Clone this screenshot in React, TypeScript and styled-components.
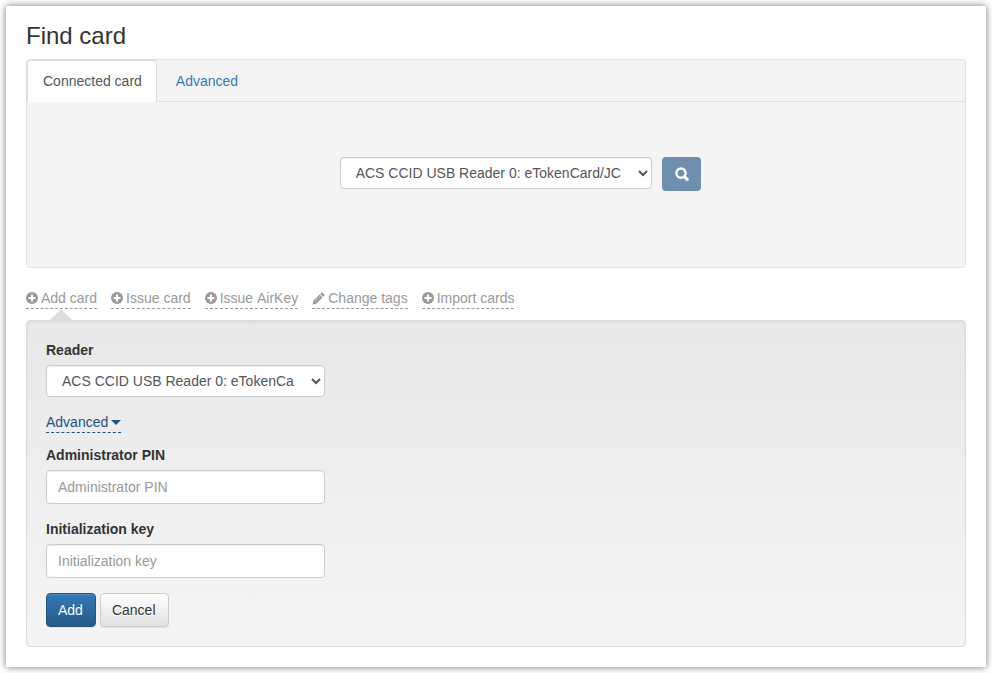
import React from "react";
import styled, { createGlobalStyle } from "styled-components";

const GlobalStyle = createGlobalStyle`
  *, *::before, *::after { box-sizing: border-box; }
  body {
    margin: 0;
    background: #fff;
    color: #333;
    font: 14px/20px "Liberation Sans", Arial, sans-serif;
  }
`;

const Sheet = styled.main`
  margin: 6px;
  padding: 20px;
  background: #fff;
  box-shadow: 0 0 7px rgba(0, 0, 0, 0.55);
`;

const Title = styled.h1`
  margin: -4px 0 10px;
  font-size: 24px;
  line-height: 27px;
  font-weight: 400;
`;

const SearchPanel = styled.section`
  border: 1px solid #e0e0e0;
  border-radius: 4px;
  background: #f4f4f4;
`;

const Tabs = styled.nav`
  display: flex;
  gap: 3px;
  border-bottom: 1px solid #ddd;
`;

const Tab = styled.a<{ $active?: boolean }>`
  margin-bottom: -1px;
  padding: 10px 14px 10px 15px;
  border: 1px solid ${(p) => (p.$active ? "#ddd" : "transparent")};
  border-bottom-color: ${(p) => (p.$active ? "#fff" : "transparent")};
  border-radius: 4px 4px 0 0;
  background: ${(p) => (p.$active ? "#fff" : "transparent")};
  color: ${(p) => (p.$active ? "#555" : "#337ab7")};
  text-decoration: none;
`;

const SearchRow = styled.form`
  display: grid;
  grid-template-columns: repeat(3, 1fr);
  padding: 55px 0 76px;
`;

const Select = styled.select`
  display: block;
  width: 100%;
  height: 32px;
  padding: 5px 12px 5px 11px;
  border: 1px solid #ccc;
  border-radius: 4px;
  background: #fff;
  color: #555;
  font: inherit;
  box-shadow: inset 0 1px 1px rgba(0, 0, 0, 0.075);
`;

const ReaderSelect = styled(Select)`
  grid-column: 2;
`;

const SearchButton = styled.button`
  display: flex;
  align-items: center;
  justify-content: center;
  width: 39px;
  height: 34px;
  margin-left: 10px;
  padding: 0;
  border: 0;
  border-radius: 4px;
  background: #6f8fae;
  color: #fff;
`;

const Actions = styled.nav`
  display: flex;
  flex-wrap: wrap;
  gap: 14px;
  margin: 20px 0 11px;
`;

const Action = styled.a<{ $open?: boolean }>`
  position: relative;
  display: flex;
  align-items: center;
  gap: 3px;
  border-bottom: 1px dashed #999;
  color: #999;
  text-decoration: none;
  font-kerning: none;

  &::after {
    content: "";
    display: ${(p) => (p.$open ? "block" : "none")};
    position: absolute;
    top: 21px;
    left: 50%;
    margin-left: -12px;
    border: 11px solid transparent;
    border-top: 0;
    border-bottom-color: #dcdcdc;
  }
`;

const Well = styled.form`
  display: flex;
  flex-direction: column;
  align-items: flex-start;
  padding: 19px;
  border: 1px solid #dcdcdc;
  border-radius: 4px;
  background: linear-gradient(#e8e8e8, #f5f5f5);
  box-shadow: inset 0 1px 3px rgba(0, 0, 0, 0.05);
`;

const Field = styled.div`
  width: 100%;
  max-width: 279px;
  margin-bottom: 15px;
`;

const Label = styled.label`
  display: block;
  margin-bottom: 5px;
  font-weight: 700;
`;

const Input = styled.input`
  display: block;
  width: 100%;
  height: 34px;
  padding: 6px 11px;
  border: 1px solid #ccc;
  border-radius: 4px;
  background: #fff;
  color: #555;
  font: inherit;
  box-shadow: inset 0 1px 1px rgba(0, 0, 0, 0.075);

  &::placeholder { color: #999; opacity: 1; }
`;

const Disclosure = styled.button`
  display: flex;
  align-items: center;
  gap: 3px;
  margin-bottom: 12px;
  padding: 0;
  border: 0;
  border-bottom: 1px dashed #23527c;
  background: none;
  color: #23527c;
  font: inherit;
`;

const Caret = styled.span`
  border: 5px solid transparent;
  border-top-color: currentColor;
  border-bottom: 0;
`;

const Buttons = styled.div`
  display: flex;
  gap: 4px;
`;

const Button = styled.button<{ $primary?: boolean }>`
  height: 34px;
  padding: 6px 12px 6px 11px;
  border: 1px solid ${(p) => (p.$primary ? "#245580" : "#ccc")};
  border-radius: 4px;
  background: ${(p) =>
    p.$primary ? "linear-gradient(#337ab7, #265a88)" : "linear-gradient(#fff, #e0e0e0)"};
  color: ${(p) => (p.$primary ? "#fff" : "#333")};
  font: inherit;
  text-shadow: ${(p) => (p.$primary ? "0 -1px 0 rgba(0, 0, 0, 0.2)" : "0 1px 0 #fff")};
  box-shadow: inset 0 1px 0 rgba(255, 255, 255, 0.15), 0 1px 1px rgba(0, 0, 0, 0.075);
`;

const PlusIcon = () => (
  <svg width="12" height="12" viewBox="0 0 12 12" aria-hidden="true">
    <circle cx="6" cy="6" r="6" fill="currentColor" />
    <path d="M6 2.5v7M2.5 6h7" stroke="#fff" strokeWidth="2" />
  </svg>
);

const PencilIcon = () => (
  <svg width="13" height="13" viewBox="0 0 13 13" fill="currentColor" aria-hidden="true">
    <path d="M9.2.9q.8-.8 1.6 0l1.3 1.3q.8.8 0 1.6l-1 1L8.2 1.9z" />
    <path d="M7.6 2.5l2.9 2.9-6 6L.4 12.7l1.2-4.2z" />
    <path d="M3.2 8.9l4.7-4.7" stroke="#fff" strokeWidth=".5" />
  </svg>
);

const SearchIcon = () => (
  <svg width="14" height="14" viewBox="0 0 14 14" fill="none" stroke="currentColor" aria-hidden="true">
    <circle cx="6" cy="6.2" r="4.6" strokeWidth="2.5" />
    <path d="M9.4 9.6l2.8 2.8" strokeWidth="3" strokeLinecap="round" />
  </svg>
);

const actions = [
  { label: "Add card", icon: PlusIcon, open: true },
  { label: "Issue card", icon: PlusIcon },
  { label: "Issue AirKey", icon: PlusIcon },
  { label: "Change tags", icon: PencilIcon },
  { label: "Import cards", icon: PlusIcon },
];

const fields = [
  { id: "admin-pin", label: "Administrator PIN" },
  { id: "init-key", label: "Initialization key" },
];

export default function App() {
  return (
    <>
      <GlobalStyle />
      <Sheet>
        <Title>Find card</Title>
        <SearchPanel>
          <Tabs>
            <Tab href="#connected" $active aria-current="page">Connected card</Tab>
            <Tab href="#advanced">Advanced</Tab>
          </Tabs>
          <SearchRow onSubmit={(e) => e.preventDefault()}>
            <ReaderSelect aria-label="Connected card">
              <option>ACS CCID USB Reader 0: eTokenCard/JC</option>
            </ReaderSelect>
            <SearchButton type="submit" aria-label="Search"><SearchIcon /></SearchButton>
          </SearchRow>
        </SearchPanel>
        <Actions>
          {actions.map(({ label, icon: Icon, open }) => (
            <Action key={label} href="#action" $open={open}>
              <Icon />
              {label}
            </Action>
          ))}
        </Actions>
        <Well onSubmit={(e) => e.preventDefault()}>
          <Field>
            <Label htmlFor="reader">Reader</Label>
            <Select id="reader">
              <option>ACS CCID USB Reader 0: eTokenCa</option>
            </Select>
          </Field>
          <Disclosure type="button" aria-expanded="true">
            Advanced
            <Caret />
          </Disclosure>
          {fields.map(({ id, label }) => (
            <Field key={id}>
              <Label htmlFor={id}>{label}</Label>
              <Input id={id} placeholder={label} />
            </Field>
          ))}
          <Buttons>
            <Button type="submit" $primary>Add</Button>
            <Button type="button">Cancel</Button>
          </Buttons>
        </Well>
      </Sheet>
    </>
  );
}
